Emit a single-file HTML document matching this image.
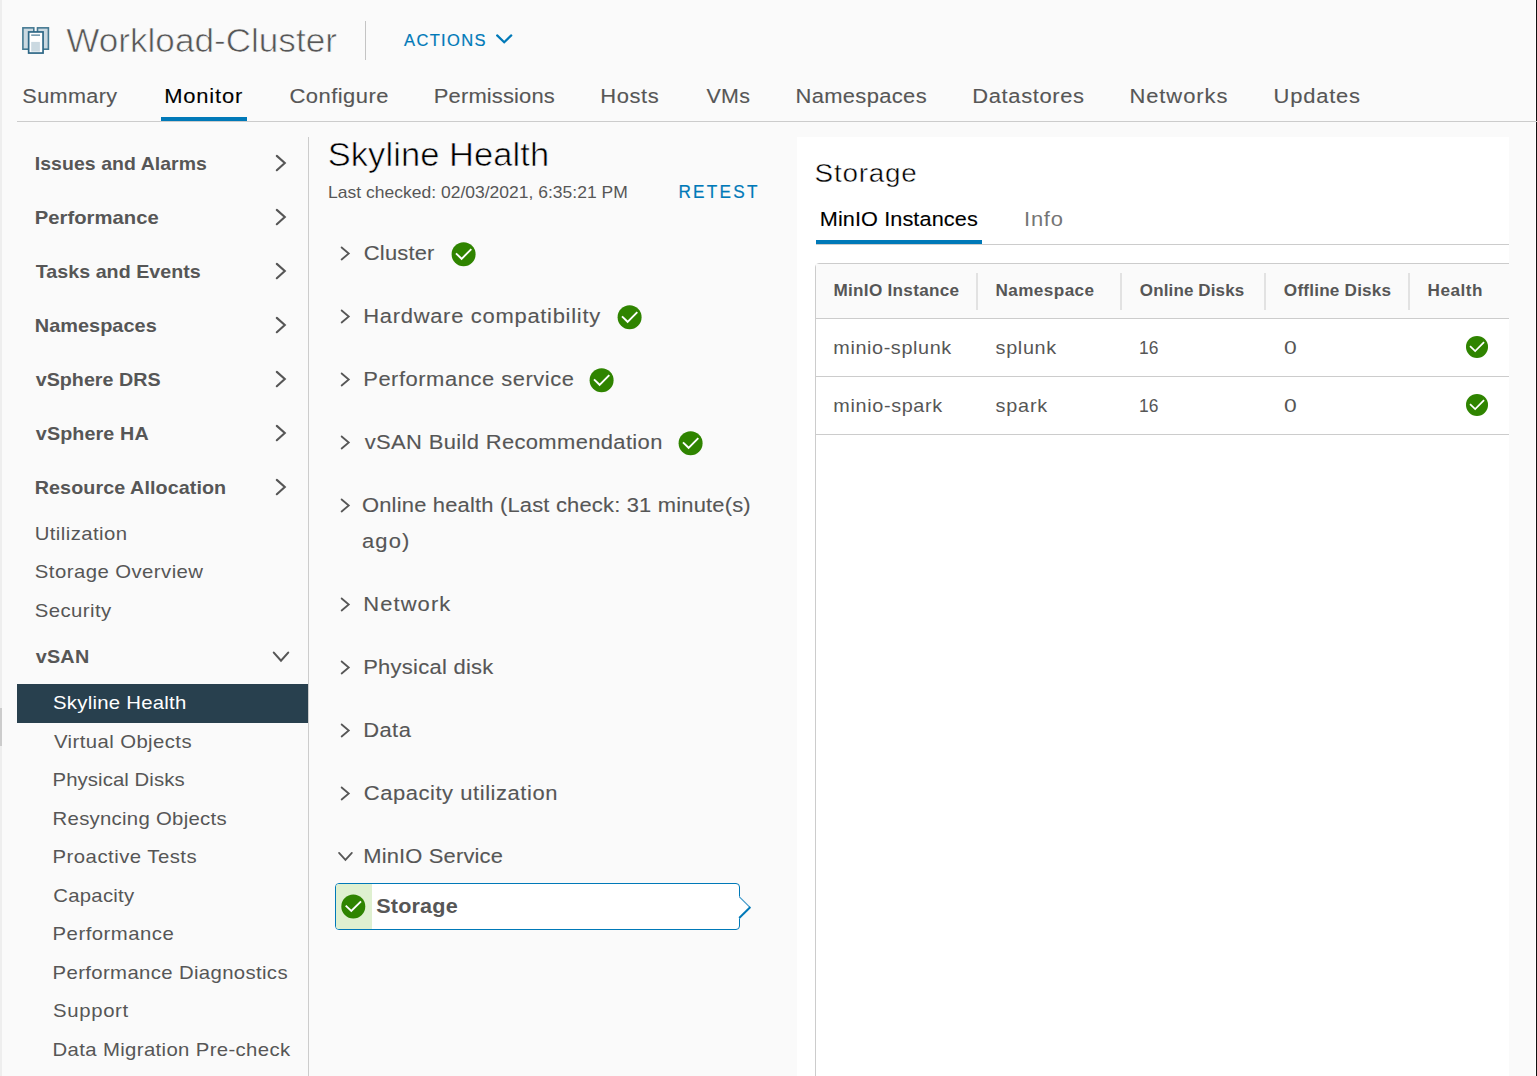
<!DOCTYPE html>
<html lang="en"><head><meta charset="utf-8"><title>Workload-Cluster - Monitor - Skyline Health</title>
<style>
html,body{margin:0;padding:0}
body{width:1537px;height:1076px;overflow:hidden;position:relative;background:#fafafa;font-family:"Liberation Sans",sans-serif;}
.t{position:absolute;white-space:nowrap;transform-origin:0 50%;margin:0;padding:0;font-weight:400;display:block}
.a{position:absolute;display:block}
ul,li,nav,h1,h2,h3,table{margin:0;padding:0;list-style:none}
.b{position:absolute;box-sizing:border-box}
</style></head><body>

<div class="b" style="left:0;top:0;width:2px;height:1076px;background:#eee"></div>
<div class="b" style="left:0;top:708px;width:2px;height:38px;background:#ccc"></div>
<div class="b" style="left:1535px;top:0;width:1px;height:1076px;background:#fff"></div>
<div class="b" style="left:1536px;top:0;width:1px;height:1076px;background:#111"></div>
<header>
<svg class="a" style="left:20px;top:24px" width="32" height="32" viewBox="0 0 32 32">
<rect x="2.9" y="3.85" width="10.9" height="21.35" fill="#cbd9e1" stroke="#447992" stroke-width="1.6"/>
<rect x="17.5" y="3.85" width="10.9" height="21.35" fill="#cbd9e1" stroke="#447992" stroke-width="1.6"/>
<rect x="8.65" y="7.95" width="14.4" height="21.1" fill="#fff" stroke="#2d6786" stroke-width="1.7"/>
<rect x="11.2" y="17.9" width="8.7" height="9.7" fill="#cbd9e1"/>
<rect x="11.2" y="10.4" width="8.8" height="1.5" fill="#6c94aa"/>
</svg>
<h1 class="t" style="left:66px;top:18.22px;font-size:34px;line-height:44px;letter-spacing:0.018px;transform:translateX(0.26px) scaleX(1.0318);color:#565656;-webkit-text-stroke:0.65px #fafafa;">Workload-Cluster</h1>
<div class="b" style="left:365px;top:21px;width:1px;height:39px;background:#c4c4c4"></div>
<span class="t" style="left:404px;top:29.78px;font-size:16.5px;line-height:21px;letter-spacing:1.344px;transform:translateX(0.09px) scaleX(1.0000);color:#0079b8;-webkit-text-stroke:0.2px #0079b8;">ACTIONS</span>
<svg class="a" style="left:494px;top:28px" width="21" height="21" viewBox="0 0 21 21"><path transform="translate(10.20 10.80)" d="M-7.05 -3.40 L0 3.40 L7.05 -3.40" fill="none" stroke="#0079b8" stroke-width="2.2" stroke-linecap="round"/></svg>
</header>
<nav>
<a class="t" style="left:22px;top:82.40px;font-size:20.5px;line-height:27px;letter-spacing:0.338px;transform:translateX(0.36px) scaleX(1.0548);color:#565656;-webkit-text-stroke:0.12px;">Summary</a>
<a class="t" style="left:164px;top:82.40px;font-size:20.5px;line-height:27px;letter-spacing:0.759px;transform:translateX(0.24px) scaleX(1.0700);color:#000;-webkit-text-stroke:0.12px;">Monitor</a>
<a class="t" style="left:289px;top:82.40px;font-size:20.5px;line-height:27px;letter-spacing:0.451px;transform:translateX(0.47px) scaleX(1.0700);color:#565656;-webkit-text-stroke:0.12px;">Configure</a>
<a class="t" style="left:433px;top:82.40px;font-size:20.5px;line-height:27px;letter-spacing:0.134px;transform:translateX(0.85px) scaleX(1.0700);color:#565656;-webkit-text-stroke:0.12px;">Permissions</a>
<a class="t" style="left:600px;top:82.40px;font-size:20.5px;line-height:27px;letter-spacing:0.568px;transform:translateX(0.24px) scaleX(1.0700);color:#565656;-webkit-text-stroke:0.12px;">Hosts</a>
<a class="t" style="left:706px;top:82.40px;font-size:20.5px;line-height:27px;letter-spacing:0.302px;transform:translateX(0.45px) scaleX(1.0454);color:#565656;-webkit-text-stroke:0.12px;">VMs</a>
<a class="t" style="left:795px;top:82.40px;font-size:20.5px;line-height:27px;letter-spacing:0.332px;transform:translateX(0.43px) scaleX(1.0700);color:#565656;-webkit-text-stroke:0.12px;">Namespaces</a>
<a class="t" style="left:972px;top:82.40px;font-size:20.5px;line-height:27px;letter-spacing:0.578px;transform:translateX(0.32px) scaleX(1.0700);color:#565656;-webkit-text-stroke:0.12px;">Datastores</a>
<a class="t" style="left:1129px;top:82.40px;font-size:20.5px;line-height:27px;letter-spacing:0.871px;transform:translateX(0.43px) scaleX(1.0700);color:#565656;-webkit-text-stroke:0.12px;">Networks</a>
<a class="t" style="left:1273px;top:82.40px;font-size:20.5px;line-height:27px;letter-spacing:0.729px;transform:translateX(0.58px) scaleX(1.0700);color:#565656;-webkit-text-stroke:0.12px;">Updates</a>
<div class="b" style="left:161px;top:117px;width:86px;height:4px;background:#0079b8"></div>
<div class="b" style="left:17px;top:121px;width:1520px;height:1px;background:#ccc"></div>
</nav>
<aside>
<div class="b" style="left:308px;top:137px;width:1px;height:939px;background:#ccc"></div>
<div class="t" style="left:34px;top:150.92px;font-size:19px;line-height:25px;letter-spacing:0.077px;font-weight:700;transform:translateX(0.74px) scaleX(1.0220);color:#565656;">Issues and Alarms</div>
<svg class="a" style="left:270px;top:153px" width="21" height="21" viewBox="0 0 21 21"><path transform="translate(10.80 10.05)" d="M-4.00 -7.20 L4.00 0 L-4.00 7.20" fill="none" stroke="#565656" stroke-width="2.1" stroke-linecap="round"/></svg>
<div class="t" style="left:34px;top:204.92px;font-size:19px;line-height:25px;letter-spacing:0.023px;font-weight:700;transform:translateX(0.75px) scaleX(1.0646);color:#565656;">Performance</div>
<svg class="a" style="left:270px;top:207px" width="21" height="21" viewBox="0 0 21 21"><path transform="translate(10.80 10.05)" d="M-4.00 -7.20 L4.00 0 L-4.00 7.20" fill="none" stroke="#565656" stroke-width="2.1" stroke-linecap="round"/></svg>
<div class="t" style="left:35px;top:258.92px;font-size:19px;line-height:25px;letter-spacing:0.028px;font-weight:700;transform:translateX(0.73px) scaleX(1.0344);color:#565656;">Tasks and Events</div>
<svg class="a" style="left:270px;top:261px" width="21" height="21" viewBox="0 0 21 21"><path transform="translate(10.80 10.05)" d="M-4.00 -7.20 L4.00 0 L-4.00 7.20" fill="none" stroke="#565656" stroke-width="2.1" stroke-linecap="round"/></svg>
<div class="t" style="left:34px;top:312.92px;font-size:19px;line-height:25px;letter-spacing:0.028px;font-weight:700;transform:translateX(0.80px) scaleX(1.0469);color:#565656;">Namespaces</div>
<svg class="a" style="left:270px;top:315px" width="21" height="21" viewBox="0 0 21 21"><path transform="translate(10.80 10.05)" d="M-4.00 -7.20 L4.00 0 L-4.00 7.20" fill="none" stroke="#565656" stroke-width="2.1" stroke-linecap="round"/></svg>
<div class="t" style="left:35px;top:366.92px;font-size:19px;line-height:25px;letter-spacing:0.019px;font-weight:700;transform:translateX(0.71px) scaleX(1.0359);color:#565656;">vSphere DRS</div>
<svg class="a" style="left:270px;top:369px" width="21" height="21" viewBox="0 0 21 21"><path transform="translate(10.80 10.05)" d="M-4.00 -7.20 L4.00 0 L-4.00 7.20" fill="none" stroke="#565656" stroke-width="2.1" stroke-linecap="round"/></svg>
<div class="t" style="left:35px;top:420.92px;font-size:19px;line-height:25px;letter-spacing:0.119px;font-weight:700;transform:translateX(0.81px) scaleX(1.0372);color:#565656;">vSphere HA</div>
<svg class="a" style="left:270px;top:423px" width="21" height="21" viewBox="0 0 21 21"><path transform="translate(10.80 10.05)" d="M-4.00 -7.20 L4.00 0 L-4.00 7.20" fill="none" stroke="#565656" stroke-width="2.1" stroke-linecap="round"/></svg>
<div class="t" style="left:34px;top:474.92px;font-size:19px;line-height:25px;letter-spacing:0.081px;font-weight:700;transform:translateX(0.70px) scaleX(1.0379);color:#565656;">Resource Allocation</div>
<svg class="a" style="left:270px;top:477px" width="21" height="21" viewBox="0 0 21 21"><path transform="translate(10.80 10.05)" d="M-4.00 -7.20 L4.00 0 L-4.00 7.20" fill="none" stroke="#565656" stroke-width="2.1" stroke-linecap="round"/></svg>
<a class="t" style="left:34px;top:520.92px;font-size:19px;line-height:25px;letter-spacing:0.396px;transform:translateX(0.65px) scaleX(1.0700);color:#565656;">Utilization</a>
<a class="t" style="left:34px;top:558.92px;font-size:19px;line-height:25px;letter-spacing:0.411px;transform:translateX(0.84px) scaleX(1.0700);color:#565656;">Storage Overview</a>
<a class="t" style="left:34px;top:597.92px;font-size:19px;line-height:25px;letter-spacing:0.376px;transform:translateX(0.84px) scaleX(1.0700);color:#565656;">Security</a>
<div class="t" style="left:35px;top:643.92px;font-size:19px;line-height:25px;letter-spacing:0.229px;font-weight:700;transform:translateX(0.70px) scaleX(1.0408);color:#565656;">vSAN</div>
<svg class="a" style="left:271px;top:646px" width="21" height="21" viewBox="0 0 21 21"><path transform="translate(10.00 10.60)" d="M-7.20 -4.00 L0 4.00 L7.20 -4.00" fill="none" stroke="#565656" stroke-width="2.1" stroke-linecap="round"/></svg>
<div class="b" style="left:17px;top:684px;width:291px;height:39px;background:#28404e"></div>
<a class="t" style="left:53px;top:689.92px;font-size:19px;line-height:25px;letter-spacing:0.234px;transform:translateX(0.06px) scaleX(1.0700);color:#fff;">Skyline Health</a>
<a class="t" style="left:53px;top:728.92px;font-size:19px;line-height:25px;letter-spacing:0.384px;transform:translateX(0.98px) scaleX(1.0700);color:#565656;">Virtual Objects</a>
<a class="t" style="left:52px;top:766.92px;font-size:19px;line-height:25px;letter-spacing:0.067px;transform:translateX(0.58px) scaleX(1.0700);color:#565656;">Physical Disks</a>
<a class="t" style="left:52px;top:805.92px;font-size:19px;line-height:25px;letter-spacing:0.262px;transform:translateX(0.58px) scaleX(1.0700);color:#565656;">Resyncing Objects</a>
<a class="t" style="left:52px;top:843.92px;font-size:19px;line-height:25px;letter-spacing:0.443px;transform:translateX(0.55px) scaleX(1.0700);color:#565656;">Proactive Tests</a>
<a class="t" style="left:53px;top:882.92px;font-size:19px;line-height:25px;letter-spacing:0.221px;transform:translateX(0.35px) scaleX(1.0700);color:#565656;">Capacity</a>
<a class="t" style="left:52px;top:920.92px;font-size:19px;line-height:25px;letter-spacing:0.450px;transform:translateX(0.58px) scaleX(1.0700);color:#565656;">Performance</a>
<a class="t" style="left:52px;top:959.92px;font-size:19px;line-height:25px;letter-spacing:0.334px;transform:translateX(0.58px) scaleX(1.0700);color:#565656;">Performance Diagnostics</a>
<a class="t" style="left:53px;top:997.92px;font-size:19px;line-height:25px;letter-spacing:0.608px;transform:translateX(0.06px) scaleX(1.0700);color:#565656;">Support</a>
<a class="t" style="left:52px;top:1036.92px;font-size:19px;line-height:25px;letter-spacing:0.330px;transform:translateX(0.58px) scaleX(1.0700);color:#565656;">Data Migration Pre-check</a>
</aside>
<main>
<h2 class="t" style="left:327px;top:132.22px;font-size:34px;line-height:44px;letter-spacing:0.079px;transform:translateX(0.68px) scaleX(1.0144);color:#000;-webkit-text-stroke:0.65px #fafafa;">Skyline Health</h2>
<span class="t" style="left:328px;top:182.11px;font-size:17px;line-height:22px;letter-spacing:0.008px;transform:translateX(0.11px) scaleX(1.0283);color:#565656;">Last checked: 02/03/2021, 6:35:21 PM</span>
<span class="t" style="left:678px;top:179.59px;font-size:18.5px;line-height:24px;letter-spacing:2.387px;transform:translateX(0.47px) scaleX(0.9300);color:#0079b8;-webkit-text-stroke:0.2px #0079b8;">RETEST</span>
<div class="t" style="left:363px;top:239.40px;font-size:20.5px;line-height:27px;letter-spacing:0.168px;transform:translateX(0.82px) scaleX(1.0700);color:#565656;-webkit-text-stroke:0.12px;">Cluster</div>
<svg class="a" style="left:335px;top:243px" width="21" height="21" viewBox="0 0 21 21"><path transform="translate(10.20 10.45)" d="M-3.55 -6.00 L3.55 0 L-3.55 6.00" fill="none" stroke="#565656" stroke-width="1.8" stroke-linecap="round"/></svg>
<svg class="a" style="left:451px;top:242px" width="26" height="26" viewBox="0 0 26 26"><g transform="translate(0.60 0.30) scale(1.0000)"><circle cx="12" cy="12" r="12" fill="#2f8400"/><path d="M4.4 11.1 L10 16.5 L19.7 6.8" fill="none" stroke="#fff" stroke-width="1.9"/></g></svg>
<div class="t" style="left:363px;top:302.40px;font-size:20.5px;line-height:27px;letter-spacing:0.672px;transform:translateX(0.21px) scaleX(1.0700);color:#565656;-webkit-text-stroke:0.12px;">Hardware compatibility</div>
<svg class="a" style="left:335px;top:306px" width="21" height="21" viewBox="0 0 21 21"><path transform="translate(10.20 10.45)" d="M-3.55 -6.00 L3.55 0 L-3.55 6.00" fill="none" stroke="#565656" stroke-width="1.8" stroke-linecap="round"/></svg>
<svg class="a" style="left:617px;top:305px" width="26" height="26" viewBox="0 0 26 26"><g transform="translate(0.60 0.30) scale(1.0000)"><circle cx="12" cy="12" r="12" fill="#2f8400"/><path d="M4.4 11.1 L10 16.5 L19.7 6.8" fill="none" stroke="#fff" stroke-width="1.9"/></g></svg>
<div class="t" style="left:363px;top:365.40px;font-size:20.5px;line-height:27px;letter-spacing:0.494px;transform:translateX(0.22px) scaleX(1.0700);color:#565656;-webkit-text-stroke:0.12px;">Performance service</div>
<svg class="a" style="left:335px;top:369px" width="21" height="21" viewBox="0 0 21 21"><path transform="translate(10.20 10.45)" d="M-3.55 -6.00 L3.55 0 L-3.55 6.00" fill="none" stroke="#565656" stroke-width="1.8" stroke-linecap="round"/></svg>
<svg class="a" style="left:589px;top:368px" width="26" height="26" viewBox="0 0 26 26"><g transform="translate(0.60 0.30) scale(1.0000)"><circle cx="12" cy="12" r="12" fill="#2f8400"/><path d="M4.4 11.1 L10 16.5 L19.7 6.8" fill="none" stroke="#fff" stroke-width="1.9"/></g></svg>
<div class="t" style="left:364px;top:428.40px;font-size:20.5px;line-height:27px;letter-spacing:0.340px;transform:translateX(0.67px) scaleX(1.0700);color:#565656;-webkit-text-stroke:0.12px;">vSAN Build Recommendation</div>
<svg class="a" style="left:335px;top:432px" width="21" height="21" viewBox="0 0 21 21"><path transform="translate(10.20 10.45)" d="M-3.55 -6.00 L3.55 0 L-3.55 6.00" fill="none" stroke="#565656" stroke-width="1.8" stroke-linecap="round"/></svg>
<svg class="a" style="left:678px;top:431px" width="26" height="26" viewBox="0 0 26 26"><g transform="translate(0.60 0.30) scale(1.0000)"><circle cx="12" cy="12" r="12" fill="#2f8400"/><path d="M4.4 11.1 L10 16.5 L19.7 6.8" fill="none" stroke="#fff" stroke-width="1.9"/></g></svg>
<div class="t" style="left:361px;top:491.40px;font-size:20.5px;line-height:27px;letter-spacing:0.174px;transform:translateX(0.99px) scaleX(1.0700);color:#565656;-webkit-text-stroke:0.12px;">Online health (Last check: 31 minute(s)</div>
<svg class="a" style="left:335px;top:495px" width="21" height="21" viewBox="0 0 21 21"><path transform="translate(10.20 10.45)" d="M-3.55 -6.00 L3.55 0 L-3.55 6.00" fill="none" stroke="#565656" stroke-width="1.8" stroke-linecap="round"/></svg>
<div class="t" style="left:362px;top:527.40px;font-size:20.5px;line-height:27px;letter-spacing:1.058px;transform:translateX(0.02px) scaleX(1.0700);color:#565656;-webkit-text-stroke:0.12px;">ago)</div>
<div class="t" style="left:363px;top:590.40px;font-size:20.5px;line-height:27px;letter-spacing:1.033px;transform:translateX(0.21px) scaleX(1.0700);color:#565656;-webkit-text-stroke:0.12px;">Network</div>
<svg class="a" style="left:335px;top:594px" width="21" height="21" viewBox="0 0 21 21"><path transform="translate(10.20 10.45)" d="M-3.55 -6.00 L3.55 0 L-3.55 6.00" fill="none" stroke="#565656" stroke-width="1.8" stroke-linecap="round"/></svg>
<div class="t" style="left:363px;top:653.40px;font-size:20.5px;line-height:27px;letter-spacing:0.257px;transform:translateX(0.21px) scaleX(1.0700);color:#565656;-webkit-text-stroke:0.12px;">Physical disk</div>
<svg class="a" style="left:335px;top:657px" width="21" height="21" viewBox="0 0 21 21"><path transform="translate(10.20 10.45)" d="M-3.55 -6.00 L3.55 0 L-3.55 6.00" fill="none" stroke="#565656" stroke-width="1.8" stroke-linecap="round"/></svg>
<div class="t" style="left:363px;top:716.40px;font-size:20.5px;line-height:27px;letter-spacing:0.403px;transform:translateX(0.20px) scaleX(1.0700);color:#565656;-webkit-text-stroke:0.12px;">Data</div>
<svg class="a" style="left:335px;top:720px" width="21" height="21" viewBox="0 0 21 21"><path transform="translate(10.20 10.45)" d="M-3.55 -6.00 L3.55 0 L-3.55 6.00" fill="none" stroke="#565656" stroke-width="1.8" stroke-linecap="round"/></svg>
<div class="t" style="left:363px;top:779.40px;font-size:20.5px;line-height:27px;letter-spacing:0.528px;transform:translateX(0.76px) scaleX(1.0700);color:#565656;-webkit-text-stroke:0.12px;">Capacity utilization</div>
<svg class="a" style="left:335px;top:783px" width="21" height="21" viewBox="0 0 21 21"><path transform="translate(10.20 10.45)" d="M-3.55 -6.00 L3.55 0 L-3.55 6.00" fill="none" stroke="#565656" stroke-width="1.8" stroke-linecap="round"/></svg>
<div class="t" style="left:363px;top:842.40px;font-size:20.5px;line-height:27px;letter-spacing:0.150px;transform:translateX(0.22px) scaleX(1.0700);color:#565656;-webkit-text-stroke:0.12px;">MinIO Service</div>
<svg class="a" style="left:335px;top:846px" width="21" height="21" viewBox="0 0 21 21"><path transform="translate(10.45 10.40)" d="M-6.40 -3.50 L0 3.50 L6.40 -3.50" fill="none" stroke="#565656" stroke-width="1.8" stroke-linecap="round"/></svg>
<div class="b" style="left:335px;top:883px;width:405px;height:47px;background:#fff;border:1px solid #0079b8;border-radius:4px;overflow:hidden"><div style="width:36px;height:100%;background:#dff0d0"></div></div>
<svg class="a" style="left:736px;top:892px" width="20" height="30" viewBox="0 0 20 30">
<path d="M3 4.6 L3.5 4.6 L14.4 15.6 L3.5 26.4 L3 26.4 Z" fill="#fff"/>
<path d="M3.4 4.8 L14 15.4" fill="none" stroke="#3f97c8" stroke-width="1.2"/>
<path d="M14.4 15 L3.2 26" fill="none" stroke="#0079b8" stroke-width="2"/></svg>
<svg class="a" style="left:341px;top:894px" width="26" height="26" viewBox="0 0 26 26"><g transform="translate(0.30 0.50) scale(1.0000)"><circle cx="12" cy="12" r="12" fill="#2f8400"/><path d="M4.4 11.1 L10 16.5 L19.7 6.8" fill="none" stroke="#fff" stroke-width="1.9"/></g></svg>
<span class="t" style="left:376px;top:892.40px;font-size:20.5px;line-height:27px;letter-spacing:0.174px;font-weight:700;transform:translateX(0.18px) scaleX(1.0537);color:#565656;">Storage</span>
</main>
<section>
<div class="b" style="left:797px;top:137px;width:712px;height:939px;background:#fff"></div>
<h3 class="t" style="left:814px;top:155.99px;font-size:26px;line-height:34px;letter-spacing:0.729px;transform:translateX(0.61px) scaleX(1.0700);color:#000;-webkit-text-stroke:0.45px #fff;">Storage</h3>
<a class="t" style="left:819px;top:205.40px;font-size:20.5px;line-height:27px;letter-spacing:0.085px;transform:translateX(0.75px) scaleX(1.0581);color:#000;-webkit-text-stroke:0.12px;">MinIO Instances</a>
<a class="t" style="left:1024px;top:205.40px;font-size:20.5px;line-height:27px;letter-spacing:0.689px;transform:translateX(0.10px) scaleX(1.0700);color:#757575;">Info</a>
<div class="b" style="left:816px;top:244px;width:693px;height:1px;background:#ccc"></div>
<div class="b" style="left:816px;top:240px;width:166px;height:4px;background:#0079b8"></div>
<div class="b" style="left:815px;top:263px;width:700px;height:830px;border:1px solid #ccc;border-radius:4px 0 0 0;background:#fff;clip-path:inset(0 6px 0 0)"><div style="height:54px;background:#fafafa;border-bottom:1px solid #ccc"></div><div style="height:57px;border-bottom:1px solid #ccc"></div><div style="height:57px;border-bottom:1px solid #ccc"></div></div>
<div class="b" style="left:976px;top:273px;width:2px;height:36.5px;background:#e2e2e2"></div>
<div class="b" style="left:1120px;top:273px;width:2px;height:36.5px;background:#e2e2e2"></div>
<div class="b" style="left:1264px;top:273px;width:2px;height:36.5px;background:#e2e2e2"></div>
<div class="b" style="left:1408px;top:273px;width:2px;height:36.5px;background:#e2e2e2"></div>
<b class="t" style="left:833px;top:279.96px;font-size:16px;line-height:21px;letter-spacing:0.277px;font-weight:700;transform:translateX(0.47px) scaleX(1.0700);color:#565656;">MinIO Instance</b>
<b class="t" style="left:995px;top:279.96px;font-size:16px;line-height:21px;letter-spacing:0.403px;font-weight:700;transform:translateX(0.47px) scaleX(1.0700);color:#565656;">Namespace</b>
<b class="t" style="left:1139px;top:279.96px;font-size:16px;line-height:21px;letter-spacing:0.130px;font-weight:700;transform:translateX(0.87px) scaleX(1.0606);color:#565656;">Online Disks</b>
<b class="t" style="left:1283px;top:279.96px;font-size:16px;line-height:21px;letter-spacing:0.202px;font-weight:700;transform:translateX(0.85px) scaleX(1.0700);color:#565656;">Offline Disks</b>
<b class="t" style="left:1427px;top:279.96px;font-size:16px;line-height:21px;letter-spacing:0.511px;font-weight:700;transform:translateX(0.47px) scaleX(1.0700);color:#565656;">Health</b>
<span class="t" style="left:833px;top:335.59px;font-size:18.5px;line-height:24px;letter-spacing:0.573px;transform:translateX(0.30px) scaleX(1.0700);color:#565656;">minio-splunk</span>
<span class="t" style="left:995px;top:335.59px;font-size:18.5px;line-height:24px;letter-spacing:0.632px;transform:translateX(0.57px) scaleX(1.0700);color:#565656;">splunk</span>
<span class="t" style="left:1138px;top:335.59px;font-size:18.5px;line-height:24px;letter-spacing:0.155px;transform:translateX(0.89px) scaleX(0.9400);color:#565656;">16</span>
<span class="t" style="left:1284px;top:335.59px;font-size:18.5px;line-height:24px;letter-spacing:0.000px;transform:translateX(0.03px) scaleX(1.2358);color:#565656;">0</span>
<svg class="a" style="left:1466px;top:335px" width="24" height="24" viewBox="0 0 24 24"><g transform="translate(0.00 0.90) scale(0.9167)"><circle cx="12" cy="12" r="12" fill="#2f8400"/><path d="M4.4 11.1 L10 16.5 L19.7 6.8" fill="none" stroke="#fff" stroke-width="1.9"/></g></svg>
<span class="t" style="left:833px;top:393.59px;font-size:18.5px;line-height:24px;letter-spacing:0.613px;transform:translateX(0.30px) scaleX(1.0700);color:#565656;">minio-spark</span>
<span class="t" style="left:995px;top:393.59px;font-size:18.5px;line-height:24px;letter-spacing:0.746px;transform:translateX(0.57px) scaleX(1.0700);color:#565656;">spark</span>
<span class="t" style="left:1138px;top:393.59px;font-size:18.5px;line-height:24px;letter-spacing:0.155px;transform:translateX(0.89px) scaleX(0.9400);color:#565656;">16</span>
<span class="t" style="left:1284px;top:393.59px;font-size:18.5px;line-height:24px;letter-spacing:0.000px;transform:translateX(0.03px) scaleX(1.2358);color:#565656;">0</span>
<svg class="a" style="left:1466px;top:393px" width="24" height="24" viewBox="0 0 24 24"><g transform="translate(0.00 0.90) scale(0.9167)"><circle cx="12" cy="12" r="12" fill="#2f8400"/><path d="M4.4 11.1 L10 16.5 L19.7 6.8" fill="none" stroke="#fff" stroke-width="1.9"/></g></svg>
</section>
</body></html>
